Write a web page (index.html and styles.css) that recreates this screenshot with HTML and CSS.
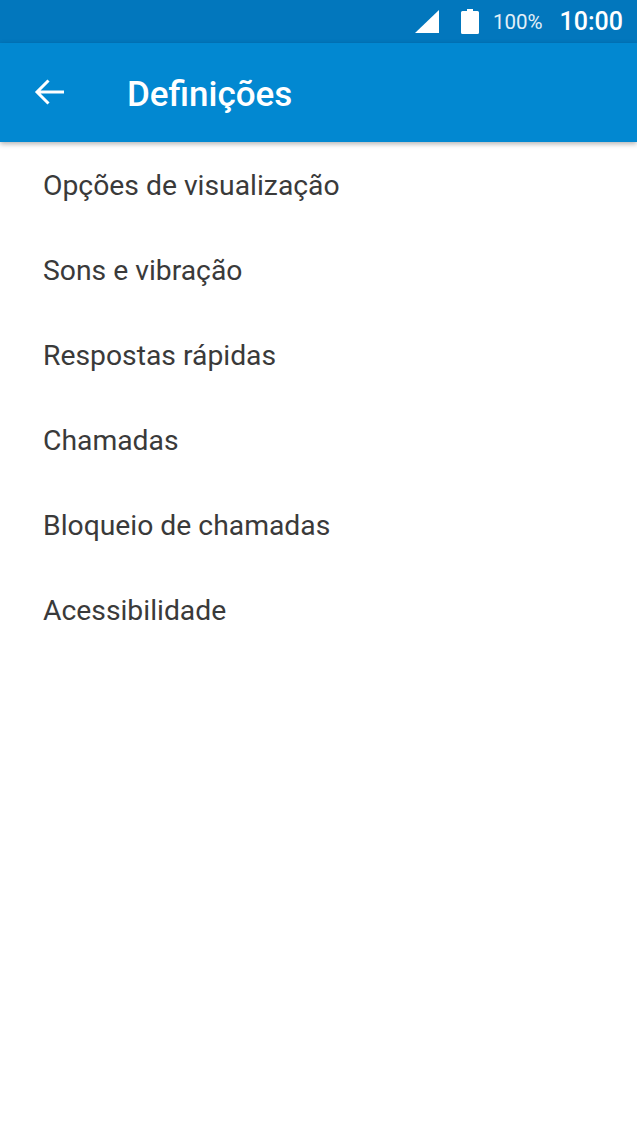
FILE: index.html
```html
<!DOCTYPE html>
<html lang="pt">
<head>
    <meta charset="UTF-8">
    <title>Definições</title>
    <link rel="stylesheet" href="styles.css">
</head>
<body>
    <div class="status">
        <svg class="signal" width="26" height="24" viewBox="0 0 26 24"><polygon points="1,23 25,0 25,23" fill="#fff"/></svg>
        <svg class="battery" width="18" height="25" viewBox="0 0 18 25"><path d="M6 0h6v2h4.500a1.500 1.500 0 0 1 1.500 1.500v20a1.500 1.500 0 0 1-1.500 1.500h-15a1.500 1.500 0 0 1-1.500-1.500v-20a1.500 1.500 0 0 1 1.500-1.500h4.500z" fill="#fff"/></svg>
        <span class="percent">100%</span>
        <span class="clock">10:00</span>
    </div>
    <header class="toolbar">
        <svg class="back" width="32" height="28" viewBox="0 0 32 28"><path d="M30 13H3M14.500 1.500L3 13l11.500 11.500" fill="none" stroke="#fff" stroke-width="3"/></svg>
        <h1 class="title">Definições</h1>
    </header>
    <ul class="menu">
        <li>Opções de visualização</li>
        <li>Sons e vibração</li>
        <li>Respostas rápidas</li>
        <li>Chamadas</li>
        <li>Bloqueio de chamadas</li>
        <li>Acessibilidade</li>
    </ul>
</body>
</html>
```

FILE: styles.css
```css
*{
    margin: 0;
    padding: 0;
    box-sizing: border-box;
}
ul,li{
    list-style: none;
}
body{
    background-color: #fff;
    font-family: Roboto, sans-serif;
    overflow: hidden;
}
.status{
    height: 43px;
    background-color: #0277bd;
    color: #fff;
    display: flex;
    align-items: center;
    justify-content: flex-end;
    padding-right: 14px;
}
.signal{
    margin-right: 21px;
}
.battery{
    margin-right: 14px;
}
.percent{
    font-size: 20.500px;
    color: #e3f0f8;
    margin-right: 17px;
}
.clock{
    font-size: 25px;
    font-weight: 500;
}
.toolbar{
    height: 99px;
    background-color: #0288d1;
    box-shadow: 0 2px 5px rgba(0,0,0,.3);
    display: flex;
    align-items: center;
    padding-left: 34px;
    position: relative;
}
.back{
    margin-right: 62px;
}
.title{
    font-size: 35px;
    font-weight: 500;
    color: #fff;
    margin-left: -1px;
    padding-top: 4px;
}
.menu li{
    height: 85px;
    padding-left: 43px;
    padding-top: 2px;
    display: flex;
    align-items: center;
    font-size: 28.300px;
    color: #3a3a3a;
}
```
